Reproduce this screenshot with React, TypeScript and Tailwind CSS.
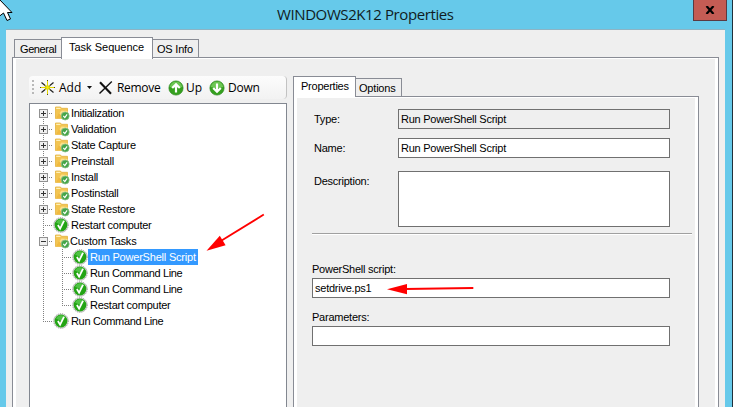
import React from "react";

const base = "font-['Liberation_Sans',sans-serif] text-[11px] leading-4 whitespace-pre text-black";
const ui = `${base} tracking-[-0.24px]`;

function Check() {
  return (
    <svg width="16" height="16" viewBox="0 0 16 16" className="shrink-0">
      <circle cx="8" cy="8" r="7.3" fill="#d9d9d9" stroke="#8d8d8d" strokeWidth="0.9" strokeDasharray="1.2 1" />
      <circle cx="8" cy="8" r="6.4" fill="#23a414" />
      <path d="M3 5.5A6 6 0 0 1 12.5 3.8L8 8Z" fill="#4fc244" />
      <path d="M4.9 8 7.1 11.6 11 3.9" fill="none" stroke="#fff" strokeWidth="1.8" />
    </svg>
  );
}

function Folder() {
  return (
    <svg width="16" height="16" viewBox="-1 0 16 16" className="shrink-0">
      <path d="M.5 2h5l1 1.3h6v10.2H.5z" fill="#f3c552" stroke="#e3b23f" strokeWidth="0.8" />
      <path d="M1.2 2.8h3.8l.8 1.3H1.2z" fill="#fff0b4" />
      <path d="M.8 13.2 6.5 5.5l6 .5V13.5z" fill="#fae08a" />
      <path d="M.8 13.2 4 8l5 5.5z" fill="#f0b93f" />
      <circle cx="10.2" cy="11" r="4" fill="#45a548" stroke="#8fc08c" strokeWidth="0.8" />
      <path d="M8.3 10.9l1.5 1.7 2.3-3.3" fill="none" stroke="#fff" strokeWidth="1.2" />
    </svg>
  );
}

type Node = { label: string; kind: "plus" | "minus" | "leaf" | "child"; last?: boolean; selected?: boolean };

const nodes: Node[] = [
  { label: "Initialization", kind: "plus" },
  { label: "Validation", kind: "plus" },
  { label: "State Capture", kind: "plus" },
  { label: "Preinstall", kind: "plus" },
  { label: "Install", kind: "plus" },
  { label: "Postinstall", kind: "plus" },
  { label: "State Restore", kind: "plus" },
  { label: "Restart computer", kind: "leaf" },
  { label: "Custom Tasks", kind: "minus" },
  { label: "Run PowerShell Script", kind: "child", selected: true },
  { label: "Run Command Line", kind: "child" },
  { label: "Run Command Line", kind: "child" },
  { label: "Restart computer", kind: "child", last: true },
  { label: "Run Command Line", kind: "leaf", last: true },
];

const tracking: Record<string, string> = {
  Initialization: "tracking-[-0.32px]",
  "Run Command Line": "tracking-[-0.34px]",
  "Custom Tasks": "tracking-[-0.2px]",
  "Run PowerShell Script": "tracking-[-0.2px]",
};

function Guide({ node, first }: { node: Node; first: boolean }) {
  const child = node.kind === "child";
  const w = child ? 42 : node.kind === "leaf" ? 23 : 24;
  const box = node.kind === "plus" || node.kind === "minus";
  return (
    <svg width={w} height="16" className="shrink-0" shapeRendering="crispEdges">
      <g stroke="#808080" strokeDasharray="1 1">
        <path d={first ? "M13.5 8V16" : !child && node.last ? "M13.5 0V9" : "M13.5 0V16"} />
        {child && <path d={node.last ? "M32.5 0V9" : "M32.5 0V16"} />}
        <path d={child ? "M32 8.5H42" : "M13 8.5H23"} />
      </g>
      {box && (
        <g>
          <rect x="9.5" y="4.5" width="8" height="8" fill="#f0f0f0" stroke="#919191" />
          <path d={node.kind === "plus" ? "M11 8.5h5M13.5 6v5" : "M11 8.5h5"} stroke="#333" />
        </g>
      )}
    </svg>
  );
}

function TreeRow({ node, first }: { node: Node; first: boolean }) {
  const box = node.kind === "plus" || node.kind === "minus";
  return (
    <div className="flex h-4">
      <Guide node={node} first={first} />
      {box ? <Folder /> : <Check />}
      <span className={`${base} ${tracking[node.label] ?? "tracking-[-0.24px]"} ${node.selected ? "bg-[#3399ff] pr-[2px] pl-[2px] text-white" : node.kind === "minus" ? "pl-0" : box ? "pl-px" : "pl-[2px]"}`}>
        {node.label}
      </span>
    </div>
  );
}

function ToolArrow({ down }: { down?: boolean }) {
  return (
    <svg width="16" height="16" viewBox="0 0 16 16" className="shrink-0">
      <circle cx="8" cy="8" r="7.1" fill="#35a01e" stroke="#2b8a1c" strokeWidth="0.7" />
      <path d="M1.8 7A6.3 6.3 0 0 1 14.2 7Q8 9 1.8 7Z" fill="#6cc653" />
      <g transform={down ? "rotate(180 8 8)" : undefined} fill="none" stroke="#fff" strokeWidth="2.2">
        <path d="M8 12.6V4.4M4.2 8 8 4.2 11.8 8" />
      </g>
    </svg>
  );
}

function Toolbar() {
  const label = "font-['Open_Sans',sans-serif] text-[12px] leading-4 whitespace-pre text-black";
  return (
    <div className="flex h-[23px] w-[258px] items-center rounded-sm border-r border-[#c2c2c2] bg-linear-to-b from-[#fcfcfc] to-[#f2f2f2]">
      <svg width="11" height="23" className="shrink-0" fill="#b9b9b9" shapeRendering="crispEdges">
        <path d="M3 4h2v2H3zM3 8h2v2H3zM3 12h2v2H3zM3 16h2v2H3z" />
      </svg>
      <svg width="16" height="16" viewBox="0 0 16 16" className="shrink-0">
        <path d="M7.5 0v15M0 7.5h15" stroke="#4a4a20" strokeWidth="1" />
        <path d="M1.5 2.5l12 10M13.5 2.5l-12 10" stroke="#222" strokeWidth="1.2" />
        <path d="M7.5 1v13M1 7.5h13" stroke="#e8dc00" strokeWidth="1" />
        <path d="M5 5.4l5 4.2M10 5.4l-5 4.2" stroke="#f4ea00" strokeWidth="1.2" />
      </svg>
      <span className={`${label} ml-[3px] w-[28px]`}>Add</span>
      <svg width="5" height="3" className="shrink-0"><path d="M0 0h5L2.5 3z" fill="#111" /></svg>
      <svg width="16" height="16" viewBox="0 0 16 16" className="ml-[6px] shrink-0">
        <path d="M2 2.2 13 13.8" stroke="#111" strokeWidth="2.1" />
        <path d="M13.8 1.5 1.5 13.5" stroke="#111" strokeWidth="1.4" />
      </svg>
      <span className={`${label} ml-[3px] w-[51px] tracking-[-0.3px]`}>Remove</span>
      <ToolArrow />
      <span className={`${label} ml-[2px] w-[23px]`}>Up</span>
      <ToolArrow down />
      <span className={`${label} ml-[3px] tracking-[-0.2px]`}>Down</span>
    </div>
  );
}

function Field({ value, className }: { value?: string; className: string }) {
  return <div className={`${ui} h-5 border border-[#707070] pt-[1px] pl-[2px] ${className}`}>{value}</div>;
}

function PropertyPane() {
  return (
    <div className="w-[406px]">
      <div className="flex h-5 items-end">
        <div className={`${base} tracking-[-0.24px] relative z-10 -mb-px h-[21px] w-[63px] border border-b-0 border-[#898c95] bg-white pt-[1px] pl-[7px]`}>Properties</div>
        <div className={`${base} tracking-[-0.2px] h-[18px] w-[46px] border border-b-0 border-l-0 border-[#898c95] pt-[1px] pl-[3px]`}>Options</div>
      </div>
      <div className="h-[330px] border border-[#898c95] bg-white px-[3px] pt-px">
        <div className="h-full bg-[#efefef] pt-[11px] pl-[15px]">
          <div className="flex">
            <span className={`${ui} w-[86px] pt-[2px] pl-[2px]`}>Type:</span>
            <Field value="Run PowerShell Script" className="w-[272px]" />
          </div>
          <div className="mt-[9px] flex">
            <span className={`${ui} w-[86px] pt-[2px] pl-[2px]`}>Name:</span>
            <Field value="Run PowerShell Script" className="w-[272px] bg-white" />
          </div>
          <div className="mt-[13px] flex">
            <span className={`${ui} w-[86px] pt-[2px] pl-[2px]`}>Description:</span>
            <div className="h-14 w-[272px] border border-[#707070] bg-white" />
          </div>
          <div className="mt-[6px] h-[2px] w-[380px] border-t border-b border-t-[#a0a0a0] border-b-white" />
          <div className={`${ui} mt-[26px] mb-[1px]`}>PowerShell script:</div>
          <Field value="setdrive.ps1" className="w-[358px] bg-white" />
          <div className={`${ui} mt-[11px] mb-[1px]`}>Parameters:</div>
          <Field className="w-[358px] bg-white" />
        </div>
      </div>
    </div>
  );
}

export default function App() {
  return (
    <div className="relative h-[407px] w-[733px] overflow-hidden border-r border-[#20303a] bg-[#66c9ea]">
      <header className="flex h-[29px] justify-end">
        <h1 className="w-[416px] pt-[2px] font-['Open_Sans',sans-serif] text-[15px] leading-6 tracking-[-0.4px] whitespace-pre text-[#101c22]">WINDOWS2K12 Properties</h1>
        <div className="mr-[5px] flex h-[21px] w-[34px] justify-center border border-t-0 border-[#5b3a42] bg-[#c45c54] pt-[6px]">
          <svg width="10" height="8"><path d="M1.5 0 8.5 8M8.5 0 1.5 8" stroke="#000" strokeWidth="2.2" /></svg>
        </div>
      </header>
      <main className="ml-[6px] h-[378px] w-[719px] border-t border-[#8db4c4] bg-[#efefef] pt-[7px] pl-[6px]">
        <div className="flex h-5 items-end pl-[2px]">
          <div className={`${base} tracking-[-0.4px] h-[18px] w-[47px] border border-r-0 border-b-0 border-[#898c95] pt-[1px] pl-[5px]`}>General</div>
          <div className={`${base} relative z-10 -mb-[2px] h-[22px] w-[92px] border border-b-0 border-[#898c95] bg-white pt-[1px] pl-[7px]`}>Task Sequence</div>
          <div className={`${base} tracking-[-0.2px] h-[18px] w-[46px] border border-b-0 border-l-0 border-[#898c95] pt-[1px] pl-[4px]`}>OS Info</div>
        </div>
        <div className="h-[370px] w-[707px] border border-[#898c95] bg-white px-[3px] pt-px">
          <div className="flex h-full bg-[#efefef] pt-[17px] pl-[13px]">
            <div className="mr-[6px] w-[258px]">
              <Toolbar />
              <div className="mt-[4px] h-[320px] border border-[#828790] bg-white pt-px">
                {nodes.map((n, i) => <TreeRow key={i} node={n} first={i === 0} />)}
              </div>
            </div>
            <PropertyPane />
          </div>
        </div>
      </main>
      <svg className="pointer-events-none absolute inset-0 z-20" width="733" height="407">
        <path d="M-1-1V16.5L3.5 13 7 20.5 10.5 19 7.5 12.5H12Z" fill="#fff" stroke="#000" />
        <g stroke="#f00" strokeWidth="1.8">
          <path d="M263.8 214.6 220 241.5" />
          <path d="M473.3 288 405 289" />
        </g>
        <path d="M206.5 250.8 219.8 235.8 225.6 245.2Z" fill="#f00" />
        <path d="M387 289.3 407 284V294.2Z" fill="#f00" />
      </svg>
    </div>
  );
}
